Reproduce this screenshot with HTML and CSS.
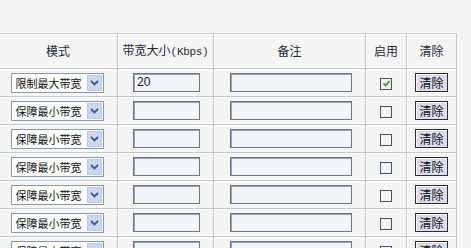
FILE: index.html
```html
<!DOCTYPE html>
<html lang="zh">
<head>
<meta charset="utf-8">
<link rel="stylesheet" href="styles.css">
</head>
<body>
<table class="grid">
  <thead>
    <tr>
      <th class="c1">模式</th>
      <th class="c2">带宽大小<span class="lat">(Kbps)</span></th>
      <th class="c3">备注</th>
      <th class="c4">启用</th>
      <th class="c5">清除</th>
    </tr>
  </thead>
  <tbody>
    <tr>
      <td><span class="sel"><span class="sel-text">限制最大带宽</span><span class="sel-btn"><svg width="9" height="6" viewBox="0 0 9 6"><path d="M1 1 L4.5 4.5 L8 1" fill="none" stroke="#3d5a8a" stroke-width="1.8"/></svg></span></span></td>
      <td><span class="inp bw">20</span></td>
      <td><span class="inp note"></span></td>
      <td><span class="chk"><svg width="9" height="9" viewBox="0 0 9 9"><path d="M1.5 4.5 L3.6 6.6 L7.6 2" fill="none" stroke="#2f9a2f" stroke-width="1.7"/></svg></span></td>
      <td><span class="btn">清除</span></td>
    </tr>
    <tr>
      <td><span class="sel"><span class="sel-text">保障最小带宽</span><span class="sel-btn"><svg width="9" height="6" viewBox="0 0 9 6"><path d="M1 1 L4.5 4.5 L8 1" fill="none" stroke="#3d5a8a" stroke-width="1.8"/></svg></span></span></td>
      <td><span class="inp bw"></span></td>
      <td><span class="inp note"></span></td>
      <td><span class="chk"></span></td>
      <td><span class="btn">清除</span></td>
    </tr>
    <tr>
      <td><span class="sel"><span class="sel-text">保障最小带宽</span><span class="sel-btn"><svg width="9" height="6" viewBox="0 0 9 6"><path d="M1 1 L4.5 4.5 L8 1" fill="none" stroke="#3d5a8a" stroke-width="1.8"/></svg></span></span></td>
      <td><span class="inp bw"></span></td>
      <td><span class="inp note"></span></td>
      <td><span class="chk"></span></td>
      <td><span class="btn">清除</span></td>
    </tr>
    <tr>
      <td><span class="sel"><span class="sel-text">保障最小带宽</span><span class="sel-btn"><svg width="9" height="6" viewBox="0 0 9 6"><path d="M1 1 L4.5 4.5 L8 1" fill="none" stroke="#3d5a8a" stroke-width="1.8"/></svg></span></span></td>
      <td><span class="inp bw"></span></td>
      <td><span class="inp note"></span></td>
      <td><span class="chk"></span></td>
      <td><span class="btn">清除</span></td>
    </tr>
    <tr>
      <td><span class="sel"><span class="sel-text">保障最小带宽</span><span class="sel-btn"><svg width="9" height="6" viewBox="0 0 9 6"><path d="M1 1 L4.5 4.5 L8 1" fill="none" stroke="#3d5a8a" stroke-width="1.8"/></svg></span></span></td>
      <td><span class="inp bw"></span></td>
      <td><span class="inp note"></span></td>
      <td><span class="chk"></span></td>
      <td><span class="btn">清除</span></td>
    </tr>
    <tr>
      <td><span class="sel"><span class="sel-text">保障最小带宽</span><span class="sel-btn"><svg width="9" height="6" viewBox="0 0 9 6"><path d="M1 1 L4.5 4.5 L8 1" fill="none" stroke="#3d5a8a" stroke-width="1.8"/></svg></span></span></td>
      <td><span class="inp bw"></span></td>
      <td><span class="inp note"></span></td>
      <td><span class="chk"></span></td>
      <td><span class="btn">清除</span></td>
    </tr>
    <tr>
      <td><span class="sel"><span class="sel-text">保障最小带宽</span><span class="sel-btn"><svg width="9" height="6" viewBox="0 0 9 6"><path d="M1 1 L4.5 4.5 L8 1" fill="none" stroke="#3d5a8a" stroke-width="1.8"/></svg></span></span></td>
      <td><span class="inp bw"></span></td>
      <td><span class="inp note"></span></td>
      <td><span class="chk"></span></td>
      <td><span class="btn">清除</span></td>
    </tr>
  </tbody>
</table>
</body>
</html>
```
FILE: styles.css
```css
html, body {
  margin: 0;
  padding: 0;
  background: #f4f4f4;
  overflow: hidden;
}
body {
  font-family: "Noto Sans CJK SC", "Noto Sans", sans-serif;
  font-size: 12px;
  color: #222;
}
.grid {
  margin: 33px 0 0 -2px;
  table-layout: fixed;
  border-collapse: separate;
  border-spacing: 0;
  width: 458px;
  border-top: 1px solid #cfcfcf;
  border-left: 1px solid #cfcfcf;
  background: #f5f5f5;
}
.grid th, .grid td {
  box-sizing: border-box;
  padding: 0;
  text-align: center;
  vertical-align: middle;
  border-right: 1px solid #c6c6c6;
  border-bottom: 1px solid #c6c6c6;
  box-shadow: inset 1px 1px 0 #ffffff;
  line-height: 14px;
}
.grid th {
  height: 35px;
  font-weight: normal;
  color: #1f2a36;
  font-size: 12px;
}
.grid td {
  height: 28px;
}
.c1 { width: 119px; }
.c2 { width: 96px; }
.c3 { width: 152px; }
.c4 { width: 41px; }
.c5 { width: 50px; }
.lat {
  font-family: "Liberation Mono", monospace;
  font-size: 11px;
  letter-spacing: -0.3px;
}
.sel {
  display: inline-flex;
  align-items: center;
  justify-content: space-between;
  box-sizing: border-box;
  width: 93px;
  height: 20px;
  margin-left: -2px;
  background: #fff;
  border: 1px solid #8b9aa8;
  padding: 0 1px 0 4px;
  vertical-align: middle;
}
.sel-text {
  font-size: 11px;
  color: #111;
  white-space: nowrap;
}
.sel-btn {
  display: flex;
  align-items: center;
  justify-content: center;
  width: 15px;
  height: 16px;
  background: #c9d7f2;
  border: 1px solid #b7c7e8;
  box-sizing: border-box;
}
.inp {
  display: inline-block;
  box-sizing: border-box;
  height: 19px;
  background: #f3f5fa;
  border: 1px solid #6d7780;
  box-shadow: inset 1px 1px 0 #9aa2aa;
  text-align: left;
  padding-left: 3px;
  font-family: "Liberation Sans", Arial, sans-serif;
  font-size: 12px;
  line-height: 17px;
  color: #111;
  vertical-align: middle;
}
.bw { width: 67px; margin-left: 2px; }
.note { width: 122px; margin-left: 3px; }
.chk {
  display: inline-flex;
  align-items: center;
  justify-content: center;
  box-sizing: border-box;
  width: 12px;
  height: 12px;
  border: 1px solid #4a5560;
  background: #f4f4f4;
  vertical-align: middle;
}
.btn {
  display: inline-block;
  box-sizing: border-box;
  width: 33px;
  height: 19px;
  border: 1px solid #2e2e2e;
  background: #dcdcef;
  box-shadow: inset 1px 1px 0 #fff;
  font-size: 12px;
  line-height: 17px;
  color: #111;
  vertical-align: middle;
}
```
